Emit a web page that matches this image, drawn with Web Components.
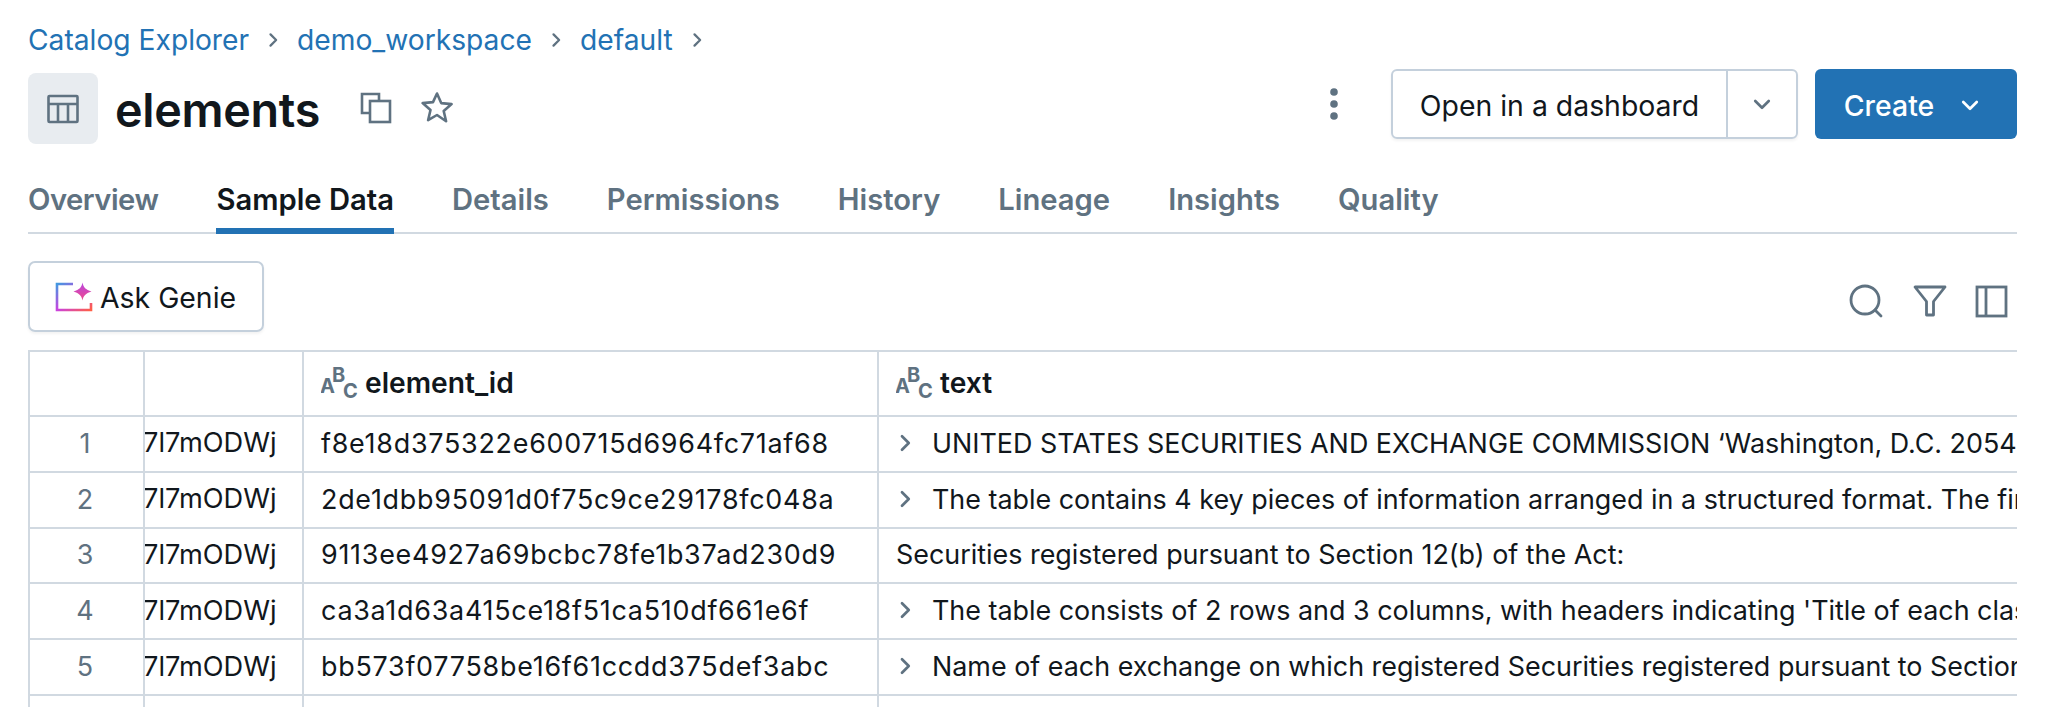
<!DOCTYPE html>
<html lang="en">
<head>
<meta charset="utf-8">
<title>elements</title>
<style>
  html, body { margin: 0; padding: 0; background: #fff; }
  body { font-family: Inter, "Liberation Sans", sans-serif; color: #11171c; height: 707px; overflow: hidden; }
</style>
</head>
<body>
<catalog-page>
  <bread-crumb slot="crumbs"></bread-crumb>
  <title-bar slot="title" name="elements"></title-bar>
  <tab-strip slot="tabs" active="Sample Data"></tab-strip>
  <action-bar slot="actions"></action-bar>
  <data-table slot="table"></data-table>
</catalog-page>

<script>
const chevron = (size, color, width) => `<svg width="${size}" height="${size}" viewBox="0 0 16 16" fill="none" stroke="${color}" stroke-width="${width}" stroke-linecap="round" stroke-linejoin="round"><path d="M6 3.5 10.5 8 6 12.5"/></svg>`;
const chevronDown = (size, color, width) => `<svg width="${size}" height="${size}" viewBox="0 0 16 16" fill="none" stroke="${color}" stroke-width="${width}" stroke-linecap="round" stroke-linejoin="round"><path d="M3.5 6 8 10.5 12.5 6"/></svg>`;

class CatalogPage extends HTMLElement {
  constructor() {
    super();
    this.shadowDOM = this.attachShadow({ mode: "open" });
  }
  connectedCallback() {
    this.shadowDOM.innerHTML = `
    <style>
      :host { display: flex; flex-direction: column; padding: 23px 31px 0 28px; height: 707px; box-sizing: border-box; overflow: hidden; }
    </style>
    <slot name="crumbs"></slot>
    <slot name="title"></slot>
    <slot name="tabs"></slot>
    <slot name="actions"></slot>
    <slot name="table"></slot>
    `;
  }
}
customElements.define("catalog-page", CatalogPage);

class BreadCrumb extends HTMLElement {
  constructor() {
    super();
    this.shadowDOM = this.attachShadow({ mode: "open" });
  }
  connectedCallback() {
    const items = ["Catalog Explorer", "demo_workspace", "default"];
    this.shadowDOM.innerHTML = `
    <style>
      :host { display: flex; align-items: center; height: 40px; font-size: 28.2px; color: #2272b4; }
      .sep { display: flex; justify-content: center; width: 48px; }
    </style>
    ${items.map((i) => `<span>${i}</span><span class="sep">${chevron(20, "#5f7281", 1.8)}</span>`).join("")}
    `;
  }
}
customElements.define("bread-crumb", BreadCrumb);

class TitleBar extends HTMLElement {
  constructor() {
    super();
    this.shadowDOM = this.attachShadow({ mode: "open" });
  }
  connectedCallback() {
    this.shadowDOM.innerHTML = `
    <style>
      :host { display: flex; align-items: center; margin-top: 16px; height: 71px; }
      .box { width: 70px; height: 71px; border-radius: 8px; background: #e8ecf0; display: flex; align-items: center; justify-content: center; }
      h1 { margin: 2px 0 0 17px; font-size: 46.7px; font-weight: 600; letter-spacing: -0.3px; color: #11171c; }
      .copy { margin-left: 39px; display: flex; margin-top: -1px; }
      .star { margin-left: 26px; display: flex; margin-top: -1px; }
      .spacer { flex: 1; }
      .kebab { display: flex; margin-right: 51px; margin-top: -9px; }
      .split { display: flex; width: 407px; height: 70px; box-sizing: border-box; margin-top: -9px; border: 2px solid #c4d0dc; border-radius: 6px; box-shadow: 0 2px 3px rgba(0,0,0,.05); font-size: 28.4px; color: #11171c; }
      .split .main { flex: 1; display: flex; align-items: center; justify-content: center; padding-top: 2px; }
      .split .more { width: 68px; border-left: 2px solid #c4d0dc; display: flex; align-items: center; justify-content: center; }
      .create { margin-left: 17px; margin-top: -9px; width: 202px; height: 70px; border-radius: 6px; background: #2272b4; color: #fff; font-size: 28.4px; font-weight: 500; display: flex; align-items: center; justify-content: center; gap: 24px; padding: 2px 6px 0 0; box-sizing: border-box; }
    </style>
    <div class="box">
      <svg width="36" height="36" viewBox="0 0 36 36" fill="none" stroke="#5f7281" stroke-width="2.6"><rect x="3.5" y="5" width="29" height="26" rx="1"/><path d="M3.5 13h29M13 13v18M23 13v18"/></svg>
    </div>
    <h1>${this.getAttribute("name")}</h1>
    <span class="copy"><svg width="34" height="34" viewBox="0 0 34 34" fill="none" stroke="#5f7281" stroke-width="2.6"><path d="M20 9V3H3v19h7"/><rect x="11" y="10" width="20" height="21"/></svg></span>
    <span class="star"><svg width="36" height="36" viewBox="0 0 36 36" fill="none" stroke="#5f7281" stroke-width="2.6" stroke-linejoin="round"><path d="M18 3.5l4.200 9.600 10.400 1-7.900 6.900 2.400 10.200L18 25l-8.900 5.200 2.400-10.200-7.900-6.900 10.400-1z"/></svg></span>
    <span class="spacer"></span>
    <span class="kebab"><svg width="12" height="36" viewBox="0 0 12 36" fill="#5f7281"><circle cx="6" cy="6" r="3.8"/><circle cx="6" cy="18" r="3.8"/><circle cx="6" cy="30" r="3.8"/></svg></span>
    <div class="split"><span class="main">Open in a dashboard</span><span class="more">${chevronDown(24, "#5f7281", 1.8)}</span></div>
    <div class="create"><span>Create</span>${chevronDown(24, "#fff", 1.8)}</div>
    `;
  }
}
customElements.define("title-bar", TitleBar);

class TabStrip extends HTMLElement {
  constructor() {
    super();
    this.shadowDOM = this.attachShadow({ mode: "open" });
  }
  connectedCallback() {
    const tabs = ["Overview", "Sample Data", "Details", "Permissions", "History", "Lineage", "Insights", "Quality"];
    const active = this.getAttribute("active");
    this.shadowDOM.innerHTML = `
    <style>
      :host { display: flex; gap: 58px; height: 90px; box-sizing: border-box; border-bottom: 2px solid #d1d9e1; font-size: 29.2px; font-weight: 600; color: #5f7281; }
      span { display: flex; align-items: center; padding-top: 27px; height: 57px; margin-bottom: -2px; border-bottom: 6px solid transparent; }
      span:first-of-type { letter-spacing: -0.5px; }
      .on { color: #11171c; border-bottom-color: #2272b4; }
    </style>
    ${tabs.map((t) => `<span class="${t === active ? "on" : ""}">${t}</span>`).join("")}
    `;
  }
}
customElements.define("tab-strip", TabStrip);

class ActionBar extends HTMLElement {
  constructor() {
    super();
    this.shadowDOM = this.attachShadow({ mode: "open" });
  }
  connectedCallback() {
    this.shadowDOM.innerHTML = `
    <style>
      :host { display: flex; align-items: center; justify-content: space-between; margin-top: 27px; height: 71px; }
      .genie { width: 236px; height: 71px; box-sizing: border-box; border: 2px solid #c4d0dc; border-radius: 7px; box-shadow: 0 2px 3px rgba(0,0,0,.05); display: flex; align-items: center; padding-left: 25px; gap: 7px; font-size: 28.4px; color: #11171c; }
      .genie span { padding-top: 2px; }
      .tools { display: flex; align-items: center; gap: 25px; margin-right: 8px; margin-top: 9px; }
      .tools svg:first-child { margin-right: 3px; }
      svg { display: block; }
    </style>
    <div class="genie">
      <svg width="38" height="30" viewBox="0 0 38 30" fill="none">
        <defs>
          <linearGradient id="frame" x1="0" y1="0" x2="1" y2="1">
            <stop offset="0" stop-color="#4299e0"/><stop offset=".5" stop-color="#ca42e0"/><stop offset="1" stop-color="#ff5f46"/>
          </linearGradient>
          <linearGradient id="spark" x1="0" y1="0" x2="0" y2="1">
            <stop offset="0" stop-color="#b845e0"/><stop offset="1" stop-color="#f04a8a"/>
          </linearGradient>
        </defs>
        <path d="M18 2H2v26h34v-7" stroke="url(#frame)" stroke-width="2.6"/>
        <path d="M27.5 .5c1 5 3 7 9 9-6 2-8 4-9 9-1-5-3-7-9-9 6-2 8-4 9-9z" fill="url(#spark)"/>
      </svg>
      <span>Ask Genie</span>
    </div>
    <div class="tools">
      <svg width="36" height="36" viewBox="0 0 36 36" fill="none" stroke="#5f7281" stroke-width="2.8" stroke-linecap="round"><circle cx="17" cy="17" r="14"/><path d="M27 27l6 6"/></svg>
      <svg width="36" height="36" viewBox="0 0 36 36" fill="none" stroke="#5f7281" stroke-width="2.8" stroke-linejoin="round"><path d="M3 4h30L21.5 18.5V32h-7V18.5z"/></svg>
      <svg width="36" height="36" viewBox="0 0 36 36" fill="none" stroke="#5f7281" stroke-width="2.8"><rect x="4" y="4" width="29" height="29"/><path d="M13 4v29"/></svg>
    </div>
    `;
  }
}
customElements.define("action-bar", ActionBar);

class DataCell extends HTMLElement {
  constructor() {
    super();
    this.shadowDOM = this.attachShadow({ mode: "open" });
  }
  connectedCallback() {
    const expand = this.hasAttribute("expand");
    this.shadowDOM.innerHTML = `
    <style>
      :host { display: flex; align-items: center; min-width: 0; overflow: hidden; white-space: nowrap; box-sizing: border-box; padding: 0 17px 2px; border-right: 2px solid #d1d9e1; border-bottom: 2px solid #d1d9e1; font-size: 26.9px; color: #11171c; }
      :host([kind="num"]) { justify-content: center; color: #5f7281; padding: 0 3px 2px 0; }
      :host([kind="clip"]) { padding: 0 0 2px; text-indent: -2px; font-size: 27.2px; }
      :host([kind="hash"]) { letter-spacing: 0.75px; }
      :host([kind="head"]) { font-size: 28.2px; font-weight: 600; gap: 6px; }
      .arrow { display: flex; flex: none; margin: 0 15px 0 -3px; }
    </style>
    ${expand ? `<span class="arrow">${chevron(24, "#5f7281", 1.8)}</span>` : ""}
    <slot></slot>
    `;
  }
}
customElements.define("data-cell", DataCell);

class DataTable extends HTMLElement {
  constructor() {
    super();
    this.shadowDOM = this.attachShadow({ mode: "open" });
  }
  connectedCallback() {
    const rows = [
      ["f8e18d375322e600715d6964fc71af68", "UNITED STATES SECURITIES AND EXCHANGE COMMISSION ‘Washington, D.C. 20549", true],
      ["2de1dbb95091d0f75c9ce29178fc048a", "The table contains 4 key pieces of information arranged in a structured format. The first", true],
      ["9113ee4927a69bcbc78fe1b37ad230d9", "Securities registered pursuant to Section 12(b) of the Act:", false],
      ["ca3a1d63a415ce18f51ca510df661e6f", "The table consists of 2 rows and 3 columns, with headers indicating 'Title of each class", true],
      ["bb573f07758be16f61ccdd375def3abc", "Name of each exchange on which registered Securities registered pursuant to Section", true],
    ];
    const abc = `<svg width="38" height="46" viewBox="0 0 38 46" fill="#5f7281" font-family="Inter, 'Liberation Sans', sans-serif" font-weight="700" font-size="20"><text x="-1" y="33">A</text><text x="11" y="22">B</text><text x="22" y="38">C</text></svg>`;
    this.shadowDOM.innerHTML = `
    <style>
      :host { display: grid; grid-template-columns: 115px 159px 575px 1fr; grid-template-rows: 65px repeat(5, 55.8px) 55px; margin-top: 18px; border-top: 2px solid #d1d9e1; border-left: 2px solid #d1d9e1; }
    </style>
    <data-cell></data-cell><data-cell></data-cell>
    <data-cell kind="head">${abc}<span>element_id</span></data-cell>
    <data-cell kind="head" style="border-right:none">${abc}<span>text</span></data-cell>
    ${rows.map((r, i) => `
      <data-cell kind="num">${i + 1}</data-cell>
      <data-cell kind="clip">7l7mODWj</data-cell>
      <data-cell kind="hash">${r[0]}</data-cell>
      <data-cell ${r[2] ? "expand" : ""} style="border-right:none">${r[1]}</data-cell>
    `).join("")}
    <data-cell></data-cell><data-cell></data-cell><data-cell></data-cell><data-cell style="border-right:none"></data-cell>
    `;
  }
}
customElements.define("data-table", DataTable);
</script>
</body>
</html>
